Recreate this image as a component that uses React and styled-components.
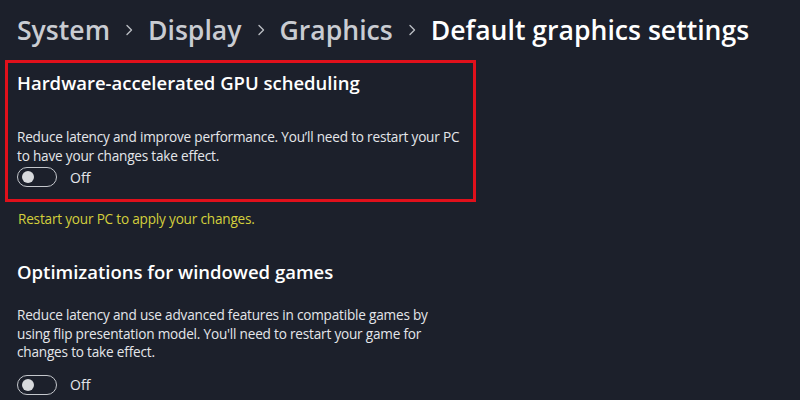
import React from "react";
import styled, { createGlobalStyle } from "styled-components";

const bg = "#1c202b";
const font = `"Open Sans", "Noto Sans", sans-serif`;

const Global = createGlobalStyle`
  html, body {
    margin: 0;
    padding: 0;
    background: ${bg};
    width: 800px;
    height: 400px;
    overflow: hidden;
  }
  * { box-sizing: border-box; }
`;

const Page = styled.div`
  width: 800px;
  height: 400px;
  background: ${bg};
  font-family: ${font};
  color: #fff;
  padding: 10px 0 0 5px;
  display: flex;
  flex-direction: column;
`;

const Crumbs = styled.nav`
  display: flex;
  align-items: center;
  gap: 14px;
  padding-left: 12px;
  height: 40px;
  font-size: 26.6px;
  font-weight: 600;
  white-space: nowrap;
`;

const Crumb = styled.span`
  color: ${p => (p.current ? "#ffffff" : "#c9ccd2")};
`;

const Chevron = styled.svg`
  width: 10px;
  height: 12px;
  flex: none;
`;

const Section = styled.section`
  display: flex;
  flex-direction: column;
  align-items: flex-start;
  padding: ${p => (p.boxed ? "7px 9px 12px 9px" : "0 12px")};
  width: ${p => (p.boxed ? "471px" : "auto")};
  border: ${p => (p.boxed ? "3px solid #e0101b" : "none")};
  margin-top: ${p => p.top || 0}px;
`;

const Title = styled.h2`
  margin: 0;
  font-size: 18.5px;
  font-weight: 600;
  line-height: 26px;
  color: #ffffff;
`;

const Desc = styled.p`
  margin: 0;
  font-size: 13.6px;
  letter-spacing: -0.2px;
  line-height: 18.5px;
  color: #e4e6ea;
  max-width: ${p => p.width}px;
`;

const ToggleRow = styled.div`
  display: flex;
  align-items: center;
  gap: 13px;
  font-size: 14px;
  color: #e4e6ea;
`;

const Track = styled.div`
  width: 40px;
  height: 20px;
  border: 1px solid #c4c7cc;
  border-radius: 10px;
  display: flex;
  align-items: center;
  padding-left: 4px;
`;

const Knob = styled.div`
  width: 12px;
  height: 12px;
  border-radius: 50%;
  background: #d8dadd;
`;

const Notice = styled.p`
  margin: 0;
  padding-left: 13px;
  font-size: 13.6px;
  letter-spacing: -0.2px;
  line-height: 18px;
  color: #d3cf3c;
`;

const Toggle = () => (
  <ToggleRow>
    <Track>
      <Knob />
    </Track>
    <span>Off</span>
  </ToggleRow>
);

const Sep = () => (
  <Chevron viewBox="0 0 10 12">
    <path d="M3 1.5 L7.5 6 L3 10.5" fill="none" stroke="#b9bcc2" strokeWidth="1.4" strokeLinecap="round" strokeLinejoin="round" />
  </Chevron>
);

export default function App() {
  return (
    <>
      <Global />
      <Page>
        <Crumbs>
          <Crumb>System</Crumb>
          <Sep />
          <Crumb>Display</Crumb>
          <Sep />
          <Crumb>Graphics</Crumb>
          <Sep />
          <Crumb current>Default graphics settings</Crumb>
        </Crumbs>
        <Section boxed top={10}>
          <Title>Hardware-accelerated GPU scheduling</Title>
          <Desc width={455} style={{ marginTop: 32 }}>
            Reduce latency and improve performance. You’ll need to restart your PC to have your changes take effect.
          </Desc>
          <div style={{ marginTop: 2 }}>
            <Toggle />
          </div>
        </Section>
        <Notice style={{ marginTop: 8 }}>Restart your PC to apply your changes.</Notice>
        <Section top={31}>
          <Title>Optimizations for windowed games</Title>
          <Desc width={440} style={{ marginTop: 21 }}>
            Reduce latency and use advanced features in compatible games by using flip presentation model. You'll need to restart your game for changes to take effect.
          </Desc>
          <div style={{ marginTop: 13 }}>
            <Toggle />
          </div>
        </Section>
      </Page>
    </>
  );
}
